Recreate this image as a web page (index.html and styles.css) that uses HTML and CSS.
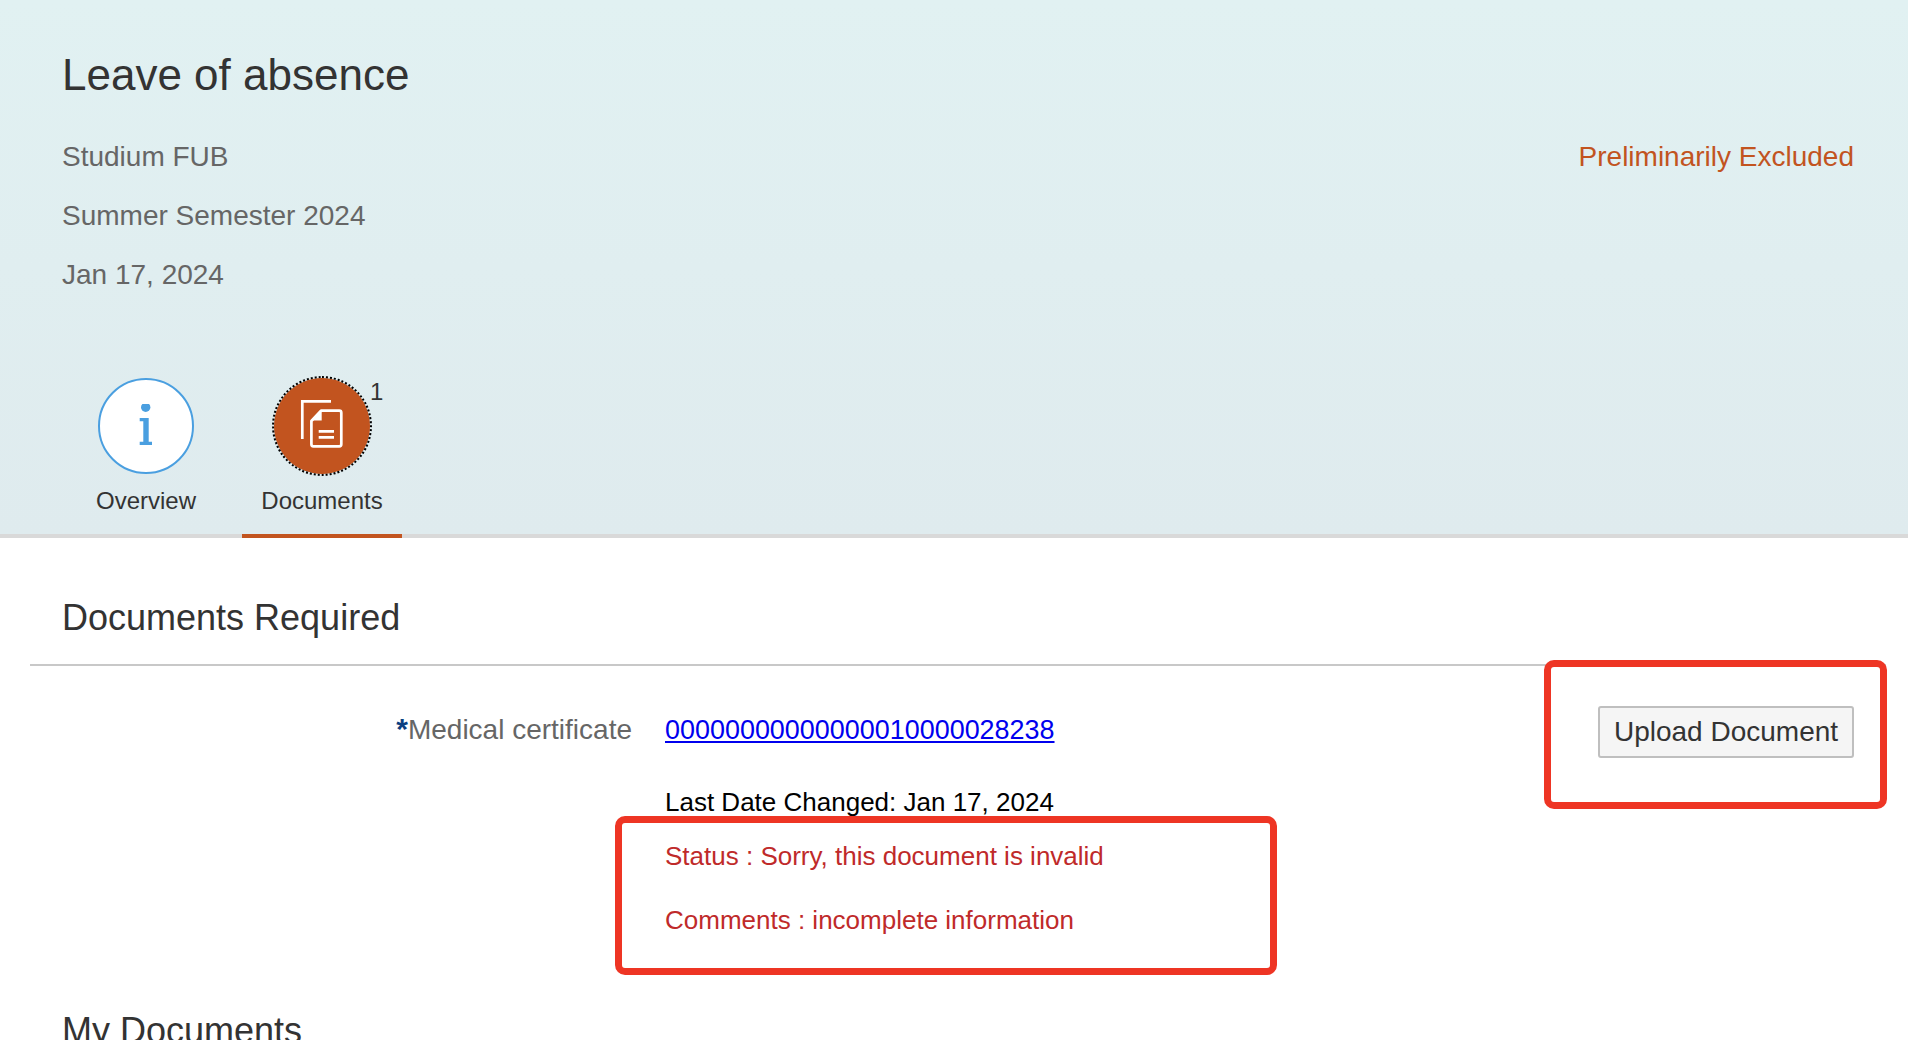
FILE: index.html
```html
<!DOCTYPE html>
<html lang="en">
<head>
<meta charset="utf-8">
<title>Leave of absence</title>
<link rel="stylesheet" href="styles.css">
</head>
<body>
<header class="hero">
  <div class="hero-top">
    <div class="hero-info">
      <h1 class="title">Leave of absence</h1>
      <p class="meta">Studium FUB</p>
      <p class="meta">Summer Semester 2024</p>
      <p class="meta">Jan 17, 2024</p>
    </div>
    <div class="state">Preliminarily Excluded</div>
  </div>
  <nav class="tabs">
    <div class="tab tab-overview">
      <div class="disc disc-info">
        <svg width="28" height="44" viewBox="0 0 28 44"><circle cx="13.700" cy="3.300" r="4.700" fill="#4a9fe0"/><path d="M7.700 14H16.700V37.700H20V41H7.700V37.700H11.300V17.300H7.700Z" fill="#4a9fe0"/></svg>
      </div>
      <span class="tab-label">Overview</span>
    </div>
    <div class="tab tab-docs">
      <div class="disc disc-docs">
        <svg width="48" height="52" viewBox="0 0 48 52" fill="none" stroke="#fff" stroke-width="2.700"><path d="M4.300 39V1.400H33"/><path d="M23 10.700H41.300Q43.300 10.700 43.300 12.700V44.300Q43.300 46.300 41.300 46.300H15.400Q13.400 46.300 13.400 44.300V21Z" stroke-linejoin="round"/><path d="M12.500 20.500H23.700V10Z" fill="#fff" stroke="none"/><path d="M20.700 31.350H36M20.700 37.350H36"/></svg>
      </div>
      <span class="badge">1</span>
      <span class="tab-label">Documents</span>
    </div>
  </nav>
</header>
<main class="content">
  <h2 class="section-title section-required">Documents Required</h2>
  <div class="doc-row">
    <div class="doc-label"><span class="req">*</span>Medical certificate</div>
    <div class="doc-detail">
      <a class="doc-link" href="#">00000000000000010000028238</a>
      <p class="changed">Last Date Changed: Jan 17, 2024</p>
      <div class="note-box">
        <p class="note">Status : Sorry, this document is invalid</p>
        <p class="note">Comments : incomplete information</p>
      </div>
    </div>
    <div class="upload-box"><button class="upload" type="button">Upload Document</button></div>
  </div>
  <h2 class="section-title section-mine">My Documents</h2>
</main>
</body>
</html>
```
FILE: styles.css
```css
html, body { margin: 0; padding: 0; height: 100%; overflow: hidden; background: #fff; }
body { font-family: "Liberation Sans", Arial, sans-serif; color: #333; height: 1040px; }
.hero { height: 534px; background: linear-gradient(#e1f1f2, #dfebee); border-bottom: 4px solid #d9d9d9; display: flex; flex-direction: column; justify-content: space-between; position: relative; }
.hero-top { display: flex; justify-content: space-between; align-items: flex-start; padding: 50px 54px 0 62px; }
.title { margin: 0 0 43px; font-size: 44px; line-height: 50px; font-weight: 400; color: #333; }
.meta { margin: 0 0 31px; font-size: 28px; line-height: 28px; color: #666; }
.state { margin-top: 91px; font-size: 28px; line-height: 32px; color: #c2541f; }
.tabs { display: flex; padding-left: 82px; margin-bottom: -4px; }
.tab { position: relative; display: flex; flex-direction: column; align-items: center; box-sizing: border-box; height: 160px; border-bottom: 4px solid transparent; }
.tab-overview { width: 128px; margin-right: 32px; }
.tab-docs { width: 160px; border-bottom-color: #c2541f; }
.disc { width: 96px; height: 96px; border-radius: 50%; box-sizing: border-box; display: flex; align-items: center; justify-content: center; }
.disc-info { background: #fff; border: 2px solid #4a9fe0; }
.disc-docs { background: #c2541f; outline: 2px dotted #000; outline-offset: 0; }
.badge { position: absolute; left: 128px; top: 1px; font-size: 24px; line-height: 26px; color: #333; }
.tab-label { margin-top: 13px; font-size: 24px; line-height: 28px; color: #333; white-space: nowrap; }
.content { position: relative; }
.section-title { margin: 0; padding: 0 0 0 62px; font-size: 36px; line-height: 40px; font-weight: 400; color: #333; }
.section-required { margin: 60px 22px 0 30px; padding-bottom: 26px; padding-left: 32px; border-bottom: 2px solid #c8c8c8; }
.doc-row { display: flex; align-items: flex-start; padding-top: 48px; position: relative; }
.doc-label { width: 632px; text-align: right; font-size: 28px; line-height: 32px; color: #666; flex: none; }
.req { color: #0a3f80; font-weight: 700; font-size: 30px; line-height: 0; }
.doc-detail { margin-left: 33px; flex: 1; position: relative; }
.doc-link { font-size: 26.950px; line-height: 32px; color: #0000ee; display: block; width: max-content; }
.changed { margin: 41px 0 0; font-size: 26px; line-height: 30px; color: #000; }
.note-box { position: relative; margin-top: 25px; }
.note { margin: 0 0 35px; font-size: 26px; line-height: 29px; color: #bf2a2a; }
.note-box::before { content: ""; position: absolute; left: -50px; top: -26px; width: 662px; height: 159px; box-sizing: border-box; border: 7px solid #ee3524; border-radius: 10px; }
.upload-box { position: absolute; right: 21px; top: -6px; width: 343px; height: 149px; box-sizing: border-box; border: 7px solid #ee3524; border-radius: 10px; background: #fff; }
.upload { position: absolute; left: 47px; top: 39px; width: 256px; height: 52px; padding: 0; background: #f5f5f5; border: 2px solid #bfbfbf; border-radius: 3px; font: 28px/1 "Liberation Sans", Arial, sans-serif; color: #333; }
.section-mine { margin-top: 41px; }
```
